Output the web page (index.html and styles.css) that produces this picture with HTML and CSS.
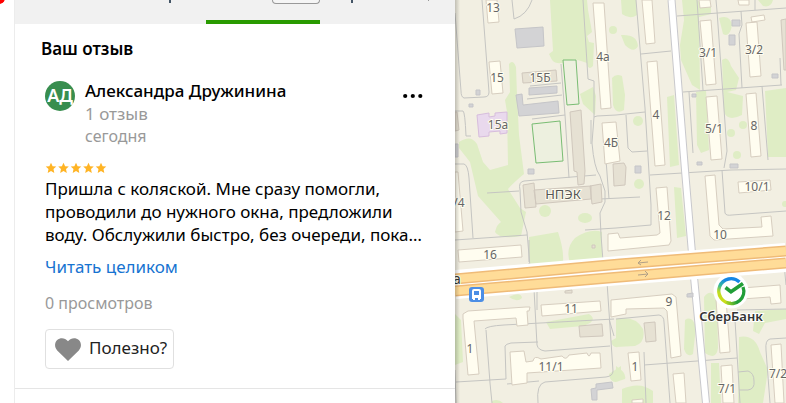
FILE: index.html
```html
<!DOCTYPE html>
<html lang="ru">
<head>
<meta charset="utf-8">
<title>Ваш отзыв</title>
<link rel="stylesheet" href="styles.css">
</head>
<body>
<div class="page">
  <div class="rail"><span class="marker"></span></div>
  <main class="panel">
    <nav class="tabs"><span class="tab tab-first"><i class="stem"></i></span><span class="tab tab-active"><span class="counter"></span></span><span class="tab tab-last"><i class="stem"></i><i class="stem stem-light"></i></span></nav>
    <section class="content">
      <h1 class="title">Ваш отзыв</h1>
      <article class="review">
        <header class="author">
          <span class="avatar">АД</span>
          <div class="author-info">
            <h2 class="name">Александра Дружинина</h2>
            <p class="muted">1 отзыв</p>
            <p class="muted date">сегодня</p>
          </div>
          <button class="more" type="button" aria-label="Ещё"><svg width="20" height="6" viewBox="0 0 20 6"><circle cx="2.2" cy="3" r="2.1"/><circle cx="9.8" cy="3" r="2.1"/><circle cx="17.3" cy="3" r="2.1"/></svg></button>
        </header>
        <svg class="stars" width="62" height="12" viewBox="0 0 62 12" role="img" aria-label="5 из 5">
          <defs><path id="star" d="M6 .7 7.6 4.2 11.3 4.6 8.5 7.1 9.3 10.9 6 9 2.7 10.9 3.5 7.1 .7 4.6 4.4 4.2Z"/></defs>
          <use href="#star"/><use href="#star" x="12.5"/><use href="#star" x="25"/><use href="#star" x="37.5"/><use href="#star" x="50"/>
        </svg>
        <p class="text">Пришла с коляской. Мне сразу помогли,<br>проводили до нужного окна, предложили<br>воду. Обслужили быстро, без очереди, пока…</p>
        <a class="link" href="#full">Читать целиком</a>
        <p class="muted views">0 просмотров</p>
        <button class="useful" type="button"><svg width="26" height="23" viewBox="0 0 26 23"><path d="M13 23 2.2 12.4C-.9 9.2-.4 4.3 2.2 2 5.2-.8 10-.5 13 3.2 16-.5 20.8-.8 23.8 2c2.6 2.3 3.1 7.2 0 10.4Z"/></svg>Полезно?</button>
      </article>
    </section>
  </main>
  <aside class="map" aria-label="Карта">
    <svg class="map-view" viewBox="455 0 331 403" preserveAspectRatio="xMinYMin slice">
      <defs>
        <linearGradient id="ring" gradientUnits="userSpaceOnUse" x1="723" y1="303" x2="734" y2="278"><stop offset="0" stop-color="#cddd18"/><stop offset=".3" stop-color="#c0dc20"/><stop offset=".55" stop-color="#35b89c"/><stop offset=".8" stop-color="#1587e5"/></linearGradient>
        <linearGradient id="ring-end" gradientUnits="userSpaceOnUse" x1="726" y1="304" x2="736" y2="300"><stop offset="0" stop-color="#b5d822"/><stop offset="1" stop-color="#219e38"/></linearGradient>
      </defs>
      <rect class="land" x="455" width="331" height="403"/>
      <g class="park">
        <path d="M550 0H587L588 10 592 32 587 36 589 42 594 43 593 66Q588 71 587 63L581 61Q573 58 569 61 557 66 552 60L549 54 553 51Z"/>
        <path d="M509 64Q513 59 516 67L517 95 519 135 524 174Q513 183 508 189L520 208 526 212 521 236Q500 240 495 232 497 224 501 222L478 196 470 162 459 148 459 142Q471 134 477 144L483 162 490 170 508 165 507 112 505 100 510 92Z"/>
        <path d="M580 94 593 87 596 96 595 115 583 104ZM612 78Q616 73 622 76L625 95 624 110Q616 115 613 105ZM621 0H636L637 15Q630 20 622 14ZM621 35Q637 34 638 46 634 54 625 45Z"/>
        <path d="M682 0H697L711 7V14L699 17 700 90 692 85 681 60 680 45 684 20ZM719 18Q730 14 732 25 730 38 723 34ZM722 60Q728 55 731 66L739 78 736 90 727 92 743 96 742 115Q728 122 724 112ZM696 92 706 90 709 150 701 153 697 145ZM765 91 786 88V157L768 157ZM667 97 674 95 679 165 670 167ZM674 187 681 188 686 236 677 238ZM758 0H773Q771 8 763 6Z"/>
        <path d="M529 237 558 232Q564 250 563 262L529 265ZM575 238Q590 228 602 232L602 261 570 263Q565 248 575 238ZM455 314 461 320 463 362 455 365ZM546 322 589 314Q599 321 583 326L550 329ZM509 297Q521 291 522 298 517 303 509 297ZM616 319Q635 315 643 329 646 342 635 346L616 347ZM616 366Q627 373 625 379L616 382ZM622 389Q640 381 653 391L653 403H622ZM685 320Q692 315 696 327L693 354Q687 358 684 349ZM704 297Q712 287 717 301L718 348Q716 361 705 353ZM739 337Q755 334 760 352L768 370 763 403H738ZM755 311 786 309V319L765 323 759 334 753 331ZM711 363H719L721 403H711ZM609 374 621 366V380Q611 386 609 374ZM611 341 621 335V346Q613 350 611 341ZM492 401Q498 398 503 403H492Z"/>
        <ellipse cx="545" cy="211" rx="6" ry="6"/><ellipse cx="585" cy="218" rx="7" ry="5"/><circle cx="613" cy="30" r="4"/><circle cx="638" cy="121" r="5"/><circle cx="639" cy="184" r="5"/><circle cx="737" cy="155" r="4"/><circle cx="731" cy="133" r="4"/><circle cx="743" cy="125" r="4"/><circle cx="785" cy="204" r="3"/>
      </g>
      <g class="path">
        <path d="M482 0 489 92Q489 97 484 97L464 98Q461 97 461 91L455 13M455 111 463 111Q465 112 466 136L471 136M455 164H464Q468 165 469 178L473 238M455 240 527 235M487 193 519 191M520 190Q518 182 524 181L596 175M520 190 521 212 527 232 530 267M512 0 514 19Q527 15 532 0M530 86 561 83M527 99 562 95M532 119 565 115M561 64 565 115 569 178M583 0 588 79 594 81 594 117 592 143Q594 168 600 176L605 191 605 202 600 213 601 235 603 261M585 230 616 228M594 117 597 116 616 115 645 112M591 120V144M606 160 609 199M600 199 640 197M616 228 651 225V205L645 108 636 0M626 115 628 148 632 152 647 151M641 54 671 51M650 175 731 170 786 169M677 16 786 8M697 0 703 90M716 0 717 11 727 151 724 168M741 11 742 25 739 34 742 88M755 0 755 10M683 92 782 85M780 58 781 85M762 86 768 160M689 92 693 153M722 170 725 213Q726 216 732 215L786 211"/>
        <path d="M529 263V267M534 289 537 345Q538 350 545 351L610 346M537 310V289M607 282 613 371Q613 376 606 377L545 382Q536 384 538 403M456 382 506 379M506 379 505 346Q506 344 511 343L538 342M507 384 539 381M485 329Q487 326 504 325L614 319M486 330 490 383 492 403M455 370 456 403M609 319 614 336M616 319 659 315Q664 316 664 322L670 403M644 352 646 403M644 365 737 358M735 320 740 403M737 310 786 309M786 338 770 339Q765 340 766 350L770 403M738 372 748 371Q754 373 754 381 755 389 748 390L739 390M529 240V262M783 253 786 285"/>
      </g>
      <path class="street-edge" d="M671.500 0 685 170 694 277 706 403"/><path class="street" d="M671.500 0 685 170 694 277 706 403"/>
      <g class="building">
        <path d="M486 0H497L499 22 488 23ZM489 62 500 61 503 93 492 94ZM593 3 604 3 611 108 601 109ZM602 123 616 122 620 161 605 164ZM458 250 521 245 522 257 459 262ZM455 172H458L463 231 455 232ZM642 0H652L655 43 646 44ZM647 62 657 61 665 165 655 166ZM700 21 711 20 716 84 706 85ZM699 0H710L711 7 700 8ZM738 0H749V5H739ZM746 23 757 22 761 76 750 77ZM751 17 764 15 765 20 752 22ZM706 97 717 96 722 159 711 160ZM746 94 756 93 761 156 751 157ZM738 182 770 180 771 190 739 193ZM705 176 715 175 719 225 723 229 762 227 761 217 771 216 773 236 714 240 710 236ZM656 188 667 187 671 241 669 245 608 251V234L618 233 620 238 657 235 660 233Z"/>
        <path d="M463 314 468 311 526 307 530 307 529 311H527L528 325 517 326 516 318 474 321 479 374 468 375 463 318ZM541 305 600 301 601 311 542 316ZM510 352 524 351 526 362 533 361Q534 355 541 359L562 356Q566 361 569 355L587 353Q589 359 591 353L600 353 601 368 527 373V383L512 385ZM611 300 672 294 676 297 681 356 671 358 667 311 664 308 626 309V314L611 317ZM628 353 639 352 641 380 631 381ZM673 374 684 373 686 403H676ZM632 400 643 399V403H632ZM716 300 726 299 730 352 720 353ZM742 288 780 285 781 303 771 304 770 297 742 299ZM721 366 732 365 734 403H723ZM771 345 781 344 784 403H775Z"/>
      </g>
      <path class="brown" d="M522 73 556 70 557 81 523 83ZM570 112 581 110 585 171 584 184 578 185 577 172 574 171ZM613 164 624 163 626 167 625 185 614 186ZM534 190 591 186V199L536 204ZM523 185 534 183 536 207 525 208ZM590 186 601 184 602 202 592 204ZM455 112H457L459 130 455 131ZM579 326 602 324 603 336 580 337ZM644 323 655 322 656 341 646 342ZM781 20 786 19V70H784ZM565 291 572 290V293H565ZM592 245H595V248H592Z"/>
      <path class="grey" d="M515 29 543 27 544 46 517 48ZM529 88 557 86V93L529 95ZM516 95 522 94 523 105 558 101 559 113 519 116ZM476 90H480V95H476ZM469 104H473V107H469ZM455 144H458V157H455ZM528 169H534V174H528ZM732 20H740V26H732ZM729 35H735V45H729ZM772 74H778V78H772ZM692 94H696V97H692ZM697 162H702V165H697ZM730 164H738V168H730ZM635 166H641V173H635ZM591 389 596 388 596 384 612 382 613 388 597 390 597 400H592ZM687 294 693 293V297H687Z"/>
      <path class="purple" d="M477 115 489 113V117L495 116V113L507 112V133L500 134V131L489 132V136L479 137Z"/>
      <path class="field" d="M563 60 576 60 579 104 567 105ZM532 124 560 121 563 161 536 163Z"/>
      <path class="road-casing" d="M455 284.500 620 270.500 786 257.500"/>
      <g class="road-edge"><path d="M455 279 620 264 786 251"/><path d="M455 291 620 277 786 263"/></g>
      <g class="road"><path d="M455 279 620 264 786 251"/><path d="M455 291 620 277 786 263"/></g>
      <path class="arrow" d="M648 262 638 263M641 260 638 263 641 265M638 275 648 274M645 271 648 274 645 277"/>
      <g class="labels">
        <text x="493" y="12">13</text><text x="497" y="82">15</text><text x="540" y="82">15Б</text><text x="498" y="129">15а</text><text x="603" y="61">4а</text><text x="656" y="119">4</text><text x="611" y="147">4Б</text><text x="708" y="57">3/1</text><text x="754" y="54">3/2</text><text x="714" y="133">5/1</text><text x="754" y="130">8</text><text x="757" y="191">10/1</text><text x="664" y="220">12</text><text x="720" y="239">10</text><text x="490" y="259">16</text><text x="459" y="207">/4</text><text x="571" y="313">11</text><text x="470" y="353">1</text><text x="551" y="371">11/1</text><text x="669" y="306">9</text><text x="635" y="371">1</text><text x="727" y="393">7/1</text><text x="778" y="378">7/2</text>
      </g>
      <text class="place" x="563" y="199">НПЭК</text>
      <text class="street-name" x="457" y="284">а</text>
      <rect x="469" y="287" width="15" height="15" rx="3" fill="#4c8ee5"/>
      <path fill="#fff" fill-rule="evenodd" d="M474 289H479Q481 289 481 291V299H480V300H478V298H475V300H473V299H472V291Q472 289 474 289ZM474 291V295H479V291Z"/>
      <circle cx="731" cy="291" r="17.500" fill="#fff"/>
      <path d="M739.500 282A12.300 12.300 0 1 0 731 303.300" fill="none" stroke="url(#ring)" stroke-width="3.400"/>
      <path d="M743 287A12.300 12.300 0 0 1 726 302.300" fill="none" stroke="url(#ring-end)" stroke-width="3.400"/>
      <path d="M725.500 287.500 731 291.800 743 283.500" fill="none" stroke="#219e38" stroke-width="3.600"/>
      <text class="bank" x="731" y="321">СберБанк</text>
    </svg>
  </aside>
</div>
</body>
</html>
```
FILE: styles.css
```css
* { box-sizing: border-box; }
body { margin: 0; font-family: "Noto Sans", sans-serif; font-size: 17px; color: #000; background: #fff; }
h1, h2, p { margin: 0; font-weight: 400; }
.page { display: grid; grid-template-columns: 14px 441px minmax(0, 1fr); min-height: 100vh; overflow: hidden; }
.rail { position: relative; }
.marker { position: absolute; left: -7px; top: -8px; width: 12px; height: 12px; border-radius: 50%; background: #f00; }
.panel { border-left: 1px solid #ececec; background: #fff; }
.tabs { height: 24px; display: grid; grid-template-columns: 191px 114px 1fr; background: #f1f1f1; }
.tab { display: flex; align-items: flex-start; }
.tab-first { padding-left: 154px; }
.tab-last { padding-left: 31px; gap: 75px; }
.stem { width: 2px; height: 3px; background: #456; }
.stem-light { width: 1px; height: 1px; background: #999; }
.tab-active { border-bottom: 4px solid #299a00; }
.counter { width: 48px; height: 4px; margin-left: 66px; border: 1px solid #999; border-top: 0; border-radius: 0 0 5px 5px; background: #f5f5f5; }
.content { padding: 13px 31px 0 26px; border-bottom: 1px solid #e5e5e5; }
.title { font-size: 17px; line-height: 24px; font-weight: 600; }
.review { padding: 18px 0 19px 4px; }
.author { display: flex; gap: 10px; align-items: flex-start; }
.avatar { width: 30px; height: 30px; margin-top: 2px; border-radius: 50%; background: #388e4f; color: #fff; font-size: 18px; line-height: 28px; font-weight: 600; text-align: center; }
.author-info { flex: 1; }
.name { font-size: 17px; line-height: 24px; font-weight: 500; }
.muted { color: #999; font-size: 17px; line-height: 22px; }
.date, .views { font-size: 16px; }
.more { width: 24px; height: 20px; margin-top: 7px; padding: 0; border: 0; background: none; }
.more svg, .stars, .useful svg { display: block; }
.more svg { margin-left: 3px; }
.stars { margin-top: 15px; fill: #ffb425; }
.text { margin-top: 3px; line-height: 23px; white-space: nowrap; }
.link { display: block; margin-top: 9px; line-height: 24px; color: #1673d1; text-decoration: none; }
.views { margin-top: 13px; }
.useful { display: flex; align-items: center; gap: 8px; height: 40px; margin-top: 15px; padding: 0 6px 4px 9px; border: 1px solid #e0e0e0; border-radius: 4px; background: #fff; color: #222; font: inherit; }
.useful svg { margin-top: 4px; fill: #888; }
.map { position: relative; overflow: hidden; background: #f2efe2; }
.map-view { position: absolute; width: 100%; height: 100%; }
.map::after { content: ""; position: absolute; left: 0; top: 0; bottom: 0; width: 5px; background: linear-gradient(90deg, #0003, #0000); }
.land { fill: #f2efe2; }
.park { fill: #dfedc5; }
.path { fill: none; stroke: #c5c5c2; stroke-width: 1; }
.street-edge { fill: none; stroke: #c8c8cc; stroke-width: 8; }
.street { fill: none; stroke: #fff; stroke-width: 6; }
.building { fill: #fffdf0; stroke: #d7cec0; }
.brown { fill: #e6e1d3; stroke: #d0c8bd; }
.grey { fill: #d3d3d5; stroke: #c5c5c8; }
.purple { fill: #e9d9ed; stroke: #d7bddd; }
.field { fill: #edf0df; stroke: #79bd73; }
.road-casing { fill: none; stroke: #fff; stroke-width: 29; }
.road-edge { fill: none; stroke: #efbb78; stroke-width: 11; }
.road { fill: none; stroke: #ffdc98; stroke-width: 8; }
.arrow { fill: none; stroke: #b1a087; stroke-width: 1; }
.map text { font-family: "Noto Sans", sans-serif; text-anchor: middle; paint-order: stroke; stroke: #fffdf0; stroke-width: 2; }
.labels { font-size: 12px; fill: #666; }
.map .place { font-size: 13px; fill: #555; }
.map .street-name { font-size: 14px; fill: #333; }
.map .bank { font-size: 13px; font-weight: 600; fill: #333; stroke: #fff; }
```
